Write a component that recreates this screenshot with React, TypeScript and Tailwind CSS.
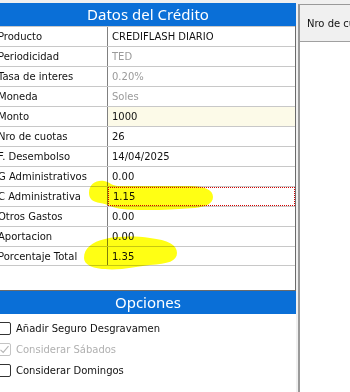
import React from "react";

type Row = { l: string; v: string; muted?: boolean; cream?: boolean; focus?: boolean };

const rows: Row[] = [
  { l: "Producto", v: "CREDIFLASH DIARIO" },
  { l: "Periodicidad", v: "TED", muted: true },
  { l: "Tasa de interes", v: "0.20%", muted: true },
  { l: "Moneda", v: "Soles", muted: true },
  { l: "Monto", v: "1000", cream: true },
  { l: "Nro de cuotas", v: "26" },
  { l: "F. Desembolso", v: "14/04/2025" },
  { l: "G Administrativos", v: "0.00" },
  { l: "C Administrativa", v: "1.15", focus: true },
  { l: "Otros Gastos", v: "0.00" },
  { l: "Aportacion", v: "0.00" },
  { l: "Porcentaje Total", v: "1.35" },
];

function Check({ checked, disabled, label }: { checked?: boolean; disabled?: boolean; label: string }) {
  return (
    <div className="h-[21px] flex items-center">
      <div
        className={`ml-[-2px] w-[13px] h-[13px] rounded-[2px] border bg-white flex items-center justify-center ${
          disabled ? "border-[#c4c4c4]" : "border-[#333333]"
        }`}
      >
        {checked && (
          <svg width="11" height="11" viewBox="0 0 11 11">
            <path d="M1.5 5.8 L4.2 8.4 L9.5 2.2" fill="none" stroke={disabled ? "#b4b4b4" : "#333"} strokeWidth="1.1" />
          </svg>
        )}
      </div>
      <span className={`ml-[5px] text-[10px] ${disabled ? "text-[#b0b0b0]" : "text-[#111]"}`}>{label}</span>
    </div>
  );
}

export default function App() {
  return (
    <div className="relative w-[350px] h-[392px] overflow-hidden bg-[#f0f0f0] flex pt-[3px] font-['DejaVu_Sans',sans-serif]">
      <div className="w-[296px] shrink-0 flex flex-col">
        <div className="h-[23px] bg-[#0a6fd7] text-white flex items-center justify-center text-[15px] font-['Noto_Sans',sans-serif]">
          Datos del Crédito
        </div>
        <div className="h-[265px] bg-white border-r border-b border-[#6b6b6b] flex flex-col">
          {rows.map((r, i) => (
            <div
              key={r.l}
              className={`h-[20px] flex border-t border-[#c8c8c8] ${i === rows.length - 1 ? "border-b" : ""}`}
            >
              <div className="w-[108px] shrink-0 border-r border-[#808080] overflow-hidden flex items-center">
                <span className="ml-[-2px] whitespace-nowrap text-[10px] text-[#111]">{r.l}</span>
              </div>
              <div
                className={`flex-1 flex items-center pl-[4px] text-[10px] ${r.cream ? "bg-[#fcfae8]" : ""} ${
                  r.muted ? "text-[#9a9a9a]" : "text-[#111]"
                } ${r.focus ? "border border-dotted border-[#d40000] pl-[3px]" : ""}`}
              >
                {r.v}
              </div>
            </div>
          ))}
        </div>
        <div className="h-[23px] bg-[#0a6fd7] text-white flex items-center justify-center text-[15px] font-['Noto_Sans',sans-serif]">
          Opciones
        </div>
        <div className="flex-1 bg-white pt-[4px] flex flex-col">
          <Check label="Añadir Seguro Desgravamen" />
          <Check checked disabled label="Considerar Sábados" />
          <Check label="Considerar Domingos" />
        </div>
      </div>
      <div className="ml-[2px] mt-[1px] flex-1 min-w-0 flex flex-col border-l-2 border-t border-[#9a9a9a] bg-white">
        <div className="h-[37px] shrink-0 bg-[#f0f0f0] border-b border-[#a0a0a0] flex items-center pl-[7px] text-[10px] text-[#111] whitespace-nowrap">
          Nro de cuotas
        </div>
        <div className="flex-1 bg-white" />
      </div>
      <svg
        className="absolute left-0 top-0 pointer-events-none mix-blend-multiply"
        width="350"
        height="392"
        viewBox="0 0 350 392"
      >
        <path
          d="M89,193 C89,184 96,180 104,181 C110,182 112,186 118,186 L190,186 C205,186 213,190 213,197 C213,204 205,207 195,208 C170,210 140,211 122,209 C112,208 108,204 100,203 C93,202 89,199 89,193 Z"
          fill="#ffff14"
        />
        <path
          d="M84,258 C84,248 92,242 105,239 C118,236 135,236 150,238 C168,240 177,245 177,253 C177,261 168,264 150,265 C140,266 132,268 122,269 C108,270 96,269 90,266 C86,264 84,261 84,258 Z"
          fill="#ffff14"
        />
      </svg>
    </div>
  );
}
